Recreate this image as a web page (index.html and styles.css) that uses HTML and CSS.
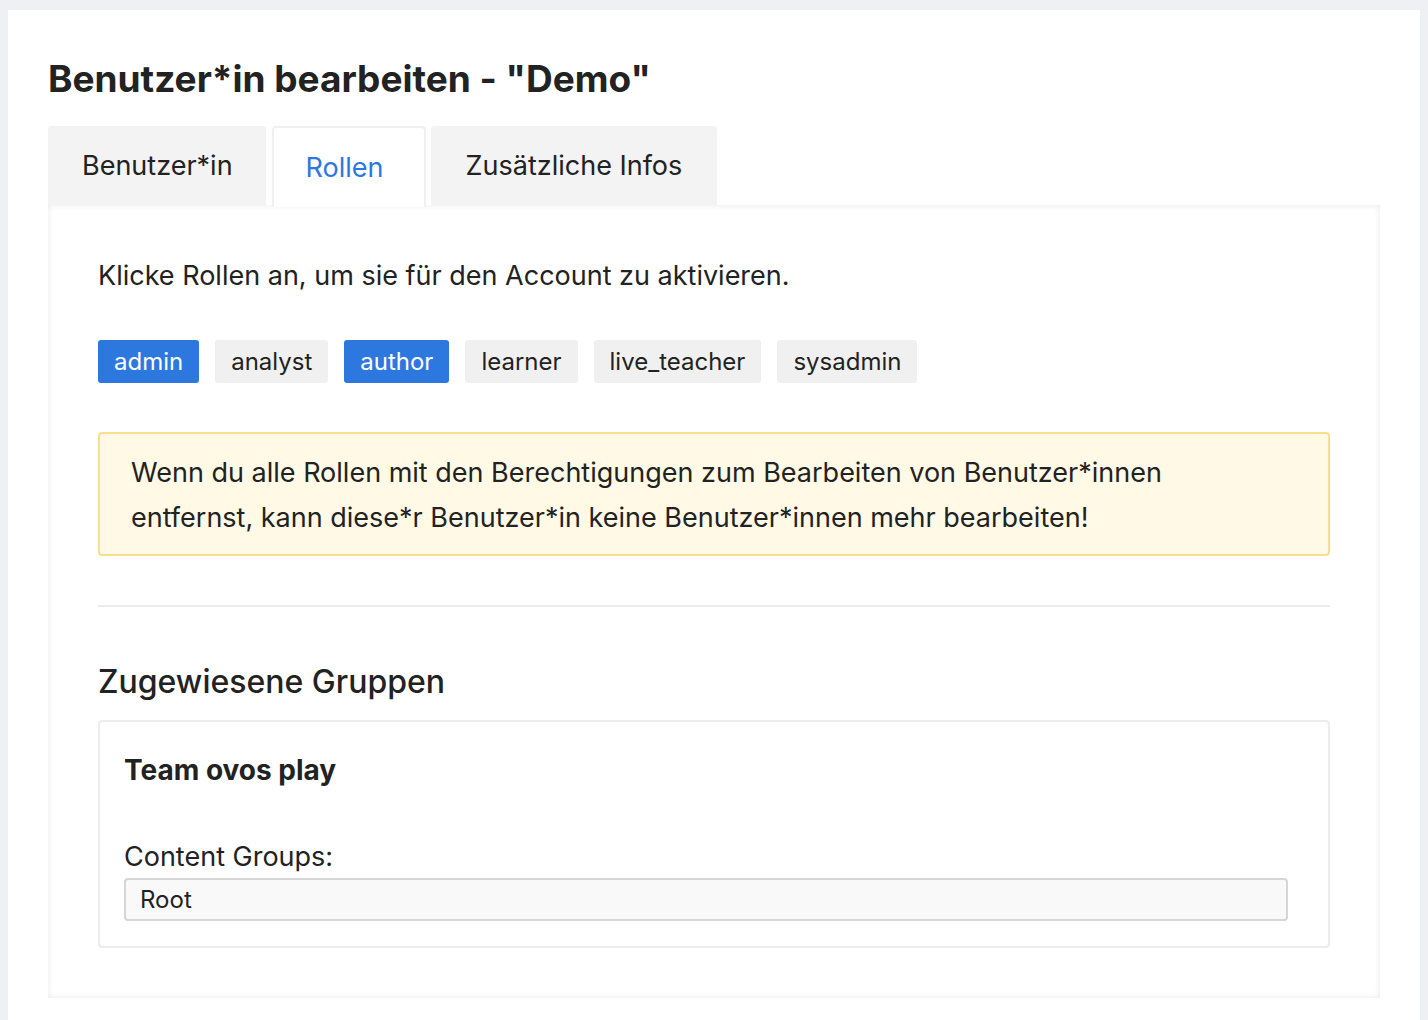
FILE: index.html
```html
<!DOCTYPE html>
<html lang="de">
<head>
<meta charset="utf-8">
<title>Benutzer*in bearbeiten</title>
<link rel="stylesheet" href="styles.css">
</head>
<body>
<div class="card">
  <h1 class="title">Benutzer*in bearbeiten - "Demo"</h1>
  <div class="tabs">
    <div class="tab">Benutzer*in</div>
    <div class="tab tab-active">Rollen</div>
    <div class="tab tab-wide">Zusätzliche Infos</div>
  </div>
  <div class="panel">
    <p class="intro">Klicke Rollen an, um sie für den Account zu aktivieren.</p>
    <div class="roles">
      <span class="role role-on">admin</span>
      <span class="role">analyst</span>
      <span class="role role-on">author</span>
      <span class="role">learner</span>
      <span class="role">live_teacher</span>
      <span class="role">sysadmin</span>
    </div>
    <div class="warning">Wenn du alle Rollen mit den Berechtigungen zum Bearbeiten von Benutzer*innen entfernst, kann diese*r Benutzer*in keine Benutzer*innen mehr bearbeiten!</div>
    <hr class="divider">
    <h2 class="subtitle">Zugewiesene Gruppen</h2>
    <div class="group">
      <div class="group-name">Team ovos play</div>
      <div class="field-label">Content Groups:</div>
      <div class="field-input">Root</div>
    </div>
  </div>
</div>
</body>
</html>
```

FILE: styles.css
```css
html, body {
  margin: 0;
  padding: 0;
}
body {
  background: #eff0f4;
  font-family: Inter, "Noto Sans", "Liberation Sans", sans-serif;
  color: #222222;
}
.card {
  background: #ffffff;
  margin: 10px 8px 0 8px;
  padding: 46px 40px 24px 40px;
  min-height: 990px;
  box-sizing: border-box;
}
.title {
  margin: 0 0 24px 0;
  font-size: 37px;
  line-height: 46px;
  font-weight: 700;
}
.tabs {
  display: flex;
  gap: 5px;
  position: relative;
  z-index: 1;
}
.tab {
  height: 79px;
  padding: 0 33px 0 34px;
  display: flex;
  align-items: center;
  font-size: 27px;
  background: #f3f3f3;
  border-radius: 4px 4px 0 0;
  box-sizing: border-box;
}
.tab-active {
  background: #ffffff;
  color: #2d78de;
  border: 2px solid #f0f0f0;
  border-bottom: none;
  height: 81px;
  margin-bottom: -2px;
  margin-left: 1px;
  padding: 0 40px 0 32px;
}
.tab-wide {
  padding: 0 35px 0 35px;
}
.panel {
  background: #ffffff;
  box-shadow: inset 0 0 6px rgba(0, 0, 0, 0.09);
  padding: 53px 50px 50px 50px;
}
.intro {
  margin: 0 0 46px 0;
  font-size: 27px;
  line-height: 36px;
}
.roles {
  display: flex;
  gap: 16px;
  margin-bottom: 49px;
}
.role {
  display: inline-flex;
  align-items: center;
  height: 43px;
  padding: 0 16px;
  font-size: 24px;
  background: #f0f0f0;
  border-radius: 3px;
  color: #222222;
}
.role-on {
  background: #2d78de;
  color: #ffffff;
}
.warning {
  background: #fff9e6;
  border: 2px solid #f6e08f;
  border-radius: 4px;
  padding: 16px 90px 14px 31px;
  font-size: 27px;
  line-height: 45px;
}
.divider {
  border: none;
  border-top: 2px solid #ececec;
  margin: 49px 0 0 0;
}
.subtitle {
  margin: 55px 0 18px 0;
  font-size: 32px;
  line-height: 40px;
  font-weight: 500;
}
.group {
  border: 2px solid #ececec;
  border-radius: 4px;
  padding: 28px 40px 25px 24px;
}
.group-name {
  font-size: 28px;
  font-weight: 700;
  line-height: 40px;
  margin-bottom: 50px;
}
.field-label {
  font-size: 27px;
  line-height: 34px;
  margin-bottom: 4px;
}
.field-input {
  background: #f9f9f9;
  border: 2px solid #d6d6d6;
  border-radius: 4px;
  height: 43px;
  box-sizing: border-box;
  padding: 0 14px;
  display: flex;
  align-items: center;
  font-size: 24px;
}
```
